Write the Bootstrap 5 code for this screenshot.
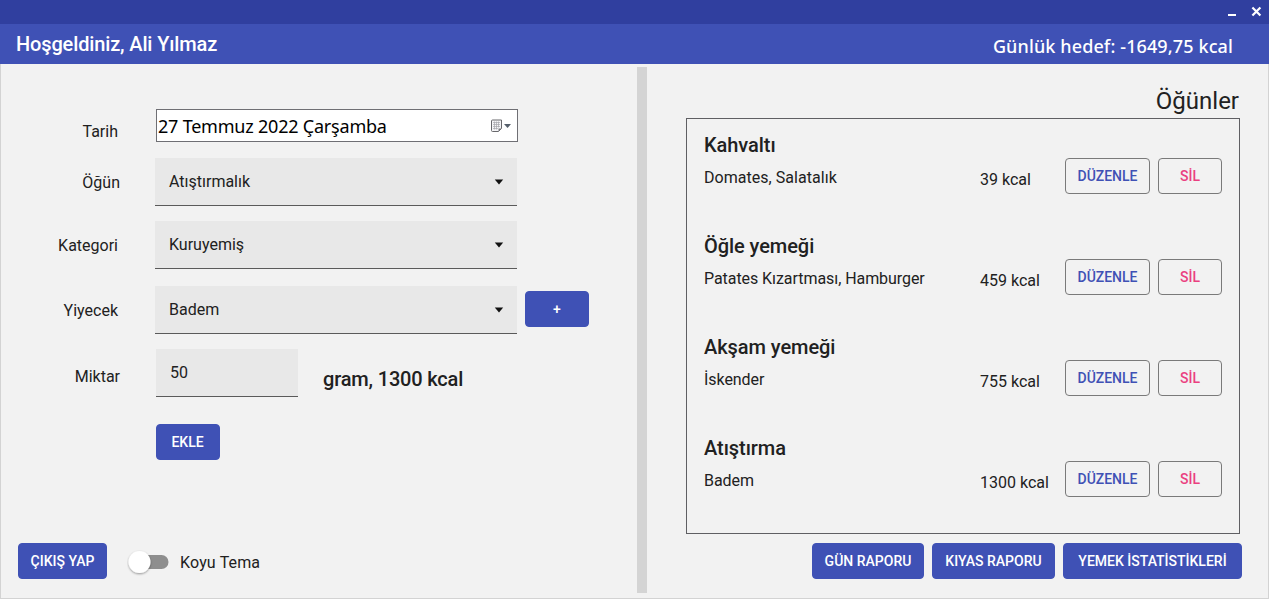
<!DOCTYPE html>
<html lang="tr">
<head>
<meta charset="utf-8">
<meta name="viewport" content="width=device-width, initial-scale=1">
<title>Günlük Kalori Takibi</title>
<link href="https://cdn.jsdelivr.net/npm/bootstrap@5.3.0/dist/css/bootstrap.min.css" rel="stylesheet">
<style>
  body { font: 400 16px/24px Roboto, "Liberation Sans", sans-serif; color: #212121; background: #f2f2f2; overflow: hidden; }
  .app { height: 599px; }
  .title-strip { height: 24px; background: #303f9f; padding-right: 7px; gap: 14px; }
  .top-bar { height: 40px; background: #3f51b5; padding: 0 36px 0 16px; }
  .top-bar .welcome { font-size: 20px; font-weight: 500; letter-spacing: -.14px; }
  .goal { font: 500 18px/24px "Noto Sans", "Open Sans", sans-serif; letter-spacing: .12px; padding-top: 4px; }
  .workspace { border: solid #d3d3d3; border-width: 0 1px 1px; min-height: 0; }
  .left-pane { width: 636px; padding: 45px 0 19px 17px; }
  .splitter { width: 10px; background: #d4d4d4; margin: 3px 0 5px; }
  .right-pane { padding: 25px 26px 19px 39px; }
  .f-row { height: 48px; }
  .f-row.date-row { height: 49px; }
  .gap-a { margin-bottom: 15px; }
  .gap-b { margin-bottom: 17px; }
  .gap-c { margin-bottom: 27px; }
  .f-label { width: 100px; margin-right: 37px; padding-top: 1px; text-align: right; }
  .f-label.wide { width: 102px; margin-right: 35px; }
  .date-row .f-label { margin-right: 38px; padding-top: 11px; }
  .f-label.amount { margin-right: 36px; padding-top: 16px; }
  .date-box { width: 362px; height: 33px; border: 1px solid #6f6f74; background: #fff; color: #000; font: 400 18px/31px "Noto Sans", "Open Sans", sans-serif; padding: 0 5px 0 1px; }
  .date-text { letter-spacing: -.21px; padding-top: 1px; }
  .fill-box { width: 362px; height: 48px; background: #e8e8e8; border-bottom: 1px solid #5a5a5a; padding: 0 13px 0 14px; }
  .fill-box svg { margin-top: 1px; }
  .fill-box.small-box { width: 142px; }
  .summary { font-size: 20px; font-weight: 500; letter-spacing: -.17px; margin-left: 25px; padding-top: 18px; }
  .btn-m { --bs-btn-font-size: 14px; --bs-btn-font-weight: 500; --bs-btn-line-height: 20px; --bs-btn-border-radius: 4px; --bs-btn-padding-x: 0; --bs-btn-padding-y: 0; height: 36px; white-space: nowrap; }
  .btn-fill { --bs-btn-bg: #3f51b5; --bs-btn-color: #fff; --bs-btn-hover-bg: #303f9f; --bs-btn-hover-color: #fff; --bs-btn-border-color: #3f51b5; }
  .btn-line { --bs-btn-border-color: #7a7a7a; --bs-btn-color: #3f51b5; letter-spacing: -.02px; }
  .btn-line.del { --bs-btn-color: #ea4080; }
  .btn-add { margin-bottom: 2px; }
  .btn-short { padding-right: 1px; }
  .w-64 { width: 64px; } .w-85 { width: 85px; } .w-89 { width: 89px; } .w-112 { width: 112px; } .w-123 { width: 123px; } .w-179 { width: 179px; }
  .switch { width: 42px; height: 28px; margin: 1px 11px 0 20px; }
  .theme-text { padding-top: 3px; letter-spacing: .15px; }
  .heading { font-size: 24px; line-height: 24px; margin: 0 3px 5px 0; }
  .meals { width: 554px; height: 416px; border: 1px solid #5f5f63; padding: 14px 17px 0; }
  .meal { height: 101px; }
  .meal-info { width: 276px; letter-spacing: -.06px; }
  .meal-info.loose { letter-spacing: .04px; }
  .meal-info h2 { font-size: 20px; font-weight: 500; line-height: 24px; letter-spacing: -.06px; margin: 0 0 9px; }
  .kcal { width: 85px; padding-top: 35px; }
  .meal-btns { gap: 8px; padding-top: 25px; }
</style>
</head>
<body>
<div class="app d-flex flex-column">
  <div class="title-strip d-flex align-items-center justify-content-end">
    <svg width="10" height="12" viewBox="0 0 10 12"><path d="M1 8h8v2H1z" fill="#fff"/></svg>
    <svg width="11" height="12" viewBox="0 0 11 12"><path d="M1.400 1.500l8 8M9.400 1.500l-8 8" stroke="#fff" stroke-width="2.200"/></svg>
  </div>
  <header class="top-bar d-flex align-items-center justify-content-between text-white">
    <span class="welcome">Hoşgeldiniz, Ali Yılmaz</span>
    <span class="goal">Günlük hedef: -1649,75 kcal</span>
  </header>
  <main class="workspace d-flex flex-grow-1">
    <section class="left-pane d-flex flex-column flex-shrink-0">
      <div class="f-row date-row d-flex">
        <span class="f-label">Tarih</span>
        <div class="date-box d-flex align-items-center">
          <span class="date-text me-auto">27 Temmuz 2022 Çarşamba</span>
          <svg width="22" height="14" viewBox="0 0 22 14">
            <path d="M2.500 1h9v8.500l-3 3h-6a1 1 0 0 1-1-1V2a1 1 0 0 1 1-1z" fill="#f4f4f6" stroke="#68686c"/>
            <path d="M3 3.500h7M3 5.500h7M3 7.500h7M3 9.500h5M4.500 2.500v8M6.500 2.500v8M8.500 2.500v6" stroke="#a6a6ac" stroke-width=".7"/>
            <path d="M8.500 12.500v-3h3z" fill="#77777c"/>
            <path d="M14 5h7l-3.500 4z" fill="#555f6b"/>
          </svg>
        </div>
      </div>
      <div class="f-row gap-a d-flex align-items-center">
        <span class="f-label wide">Öğün</span>
        <div class="fill-box d-flex align-items-center"><span class="me-auto">Atıştırmalık</span><svg width="10" height="6" viewBox="0 0 10 6"><path d="M.8.500h8.400L5 5.500z" fill="#111"/></svg></div>
      </div>
      <div class="f-row gap-b d-flex align-items-center">
        <span class="f-label">Kategori</span>
        <div class="fill-box d-flex align-items-center"><span class="me-auto">Kuruyemiş</span><svg width="10" height="6" viewBox="0 0 10 6"><path d="M.8.500h8.400L5 5.500z" fill="#111"/></svg></div>
      </div>
      <div class="f-row gap-a d-flex align-items-center">
        <span class="f-label">Yiyecek</span>
        <div class="fill-box d-flex align-items-center"><span class="me-auto">Badem</span><svg width="10" height="6" viewBox="0 0 10 6"><path d="M.8.500h8.400L5 5.500z" fill="#111"/></svg></div>
        <button class="btn btn-m btn-fill btn-add w-64 ms-2">+</button>
      </div>
      <div class="f-row gap-c d-flex">
        <span class="f-label wide amount">Miktar</span>
        <div class="fill-box small-box d-flex align-items-center">50</div>
        <span class="summary">gram, 1300 kcal</span>
      </div>
      <div class="d-flex" style="padding-left:138px"><button class="btn btn-m btn-fill btn-short w-64">EKLE</button></div>
      <div class="d-flex align-items-center mt-auto">
        <button class="btn btn-m btn-fill w-89">ÇIKIŞ YAP</button>
        <svg class="switch" viewBox="0 0 42 28">
          <defs><filter id="knob" x="-30%" y="-30%" width="160%" height="170%"><feDropShadow dx="0" dy="1" stdDeviation="1" flood-opacity=".4"/></filter></defs>
          <rect x="8" y="7" width="33.500" height="14" rx="7" fill="#8e8e8e"/>
          <circle cx="12.500" cy="14" r="11" fill="#fff" filter="url(#knob)"/>
        </svg>
        <span class="theme-text">Koyu Tema</span>
      </div>
    </section>
    <div class="splitter flex-shrink-0"></div>
    <section class="right-pane d-flex flex-column flex-grow-1">
      <h1 class="heading text-end fw-normal">Öğünler</h1>
      <div class="meals">
        <article class="meal d-flex">
          <div class="meal-info loose"><h2>Kahvaltı</h2><div>Domates, Salatalık</div></div>
          <div class="kcal">39 kcal</div>
          <div class="meal-btns d-flex"><button class="btn btn-m btn-line w-85">DÜZENLE</button><button class="btn btn-m btn-line del w-64">SİL</button></div>
        </article>
        <article class="meal d-flex">
          <div class="meal-info"><h2>Öğle yemeği</h2><div>Patates Kızartması, Hamburger</div></div>
          <div class="kcal">459 kcal</div>
          <div class="meal-btns d-flex"><button class="btn btn-m btn-line w-85">DÜZENLE</button><button class="btn btn-m btn-line del w-64">SİL</button></div>
        </article>
        <article class="meal d-flex">
          <div class="meal-info"><h2>Akşam yemeği</h2><div>İskender</div></div>
          <div class="kcal">755 kcal</div>
          <div class="meal-btns d-flex"><button class="btn btn-m btn-line w-85">DÜZENLE</button><button class="btn btn-m btn-line del w-64">SİL</button></div>
        </article>
        <article class="meal d-flex">
          <div class="meal-info"><h2>Atıştırma</h2><div>Badem</div></div>
          <div class="kcal">1300 kcal</div>
          <div class="meal-btns d-flex"><button class="btn btn-m btn-line w-85">DÜZENLE</button><button class="btn btn-m btn-line del w-64">SİL</button></div>
        </article>
      </div>
      <div class="d-flex justify-content-end gap-2 mt-auto">
        <button class="btn btn-m btn-fill w-112">GÜN RAPORU</button>
        <button class="btn btn-m btn-fill w-123">KIYAS RAPORU</button>
        <button class="btn btn-m btn-fill w-179">YEMEK İSTATİSTİKLERİ</button>
      </div>
    </section>
  </main>
</div>
<script src="https://cdn.jsdelivr.net/npm/bootstrap@5.3.0/dist/js/bootstrap.bundle.min.js"></script>
</body>
</html>
